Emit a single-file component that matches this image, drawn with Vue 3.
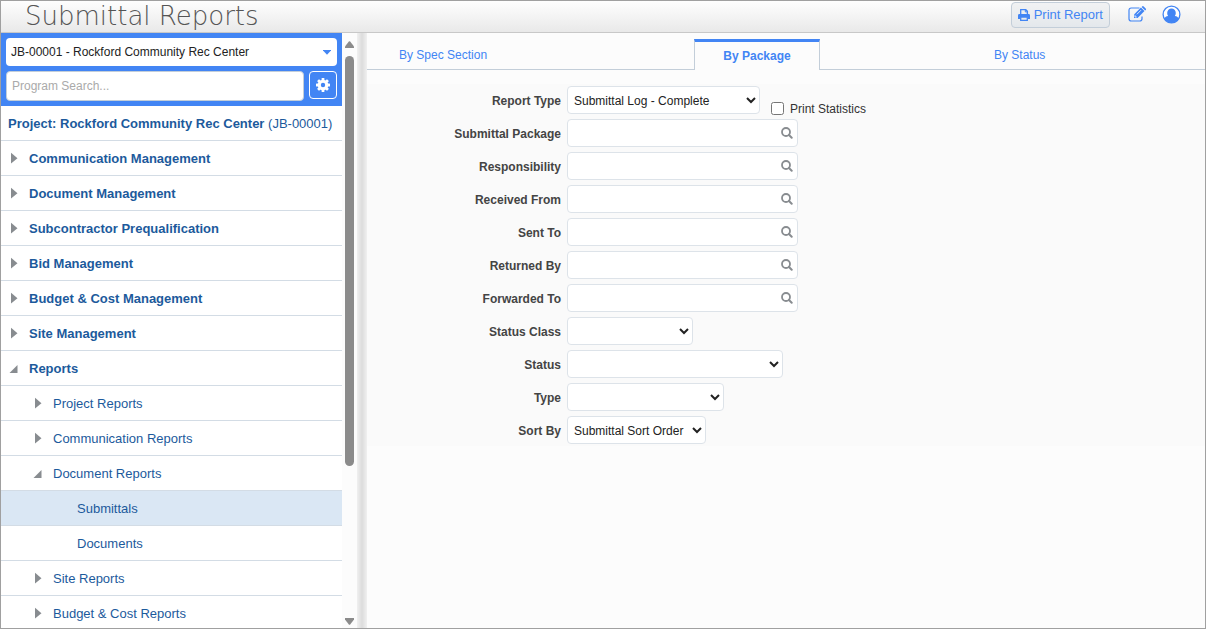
<script setup>
import { ref } from 'vue'

const project = ref('JB-00001 - Rockford Community Rec Center')
const search = ref('')
const printStats = ref(false)

const tree = [
  { label: 'Communication Management', level: 1 },
  { label: 'Document Management', level: 1 },
  { label: 'Subcontractor Prequalification', level: 1 },
  { label: 'Bid Management', level: 1 },
  { label: 'Budget & Cost Management', level: 1 },
  { label: 'Site Management', level: 1 },
  { label: 'Reports', level: 1, open: true },
  { label: 'Project Reports', level: 2 },
  { label: 'Communication Reports', level: 2 },
  { label: 'Document Reports', level: 2, open: true },
  { label: 'Submittals', level: 3, selected: true },
  { label: 'Documents', level: 3 },
  { label: 'Site Reports', level: 2 },
  { label: 'Budget & Cost Reports', level: 2 },
]

const fields = [
  { id: 'report-type', label: 'Report Type', kind: 'select', size: 'w-report', value: 'Submittal Log - Complete' },
  { id: 'package', label: 'Submittal Package', kind: 'lookup' },
  { id: 'responsibility', label: 'Responsibility', kind: 'lookup' },
  { id: 'received-from', label: 'Received From', kind: 'lookup' },
  { id: 'sent-to', label: 'Sent To', kind: 'lookup' },
  { id: 'returned-by', label: 'Returned By', kind: 'lookup' },
  { id: 'forwarded-to', label: 'Forwarded To', kind: 'lookup' },
  { id: 'status-class', label: 'Status Class', kind: 'select', size: 'w-class', value: '' },
  { id: 'status', label: 'Status', kind: 'select', size: 'w-status', value: '' },
  { id: 'type', label: 'Type', kind: 'select', size: 'w-type', value: '' },
  { id: 'sort-by', label: 'Sort By', kind: 'select', size: 'w-sort', value: 'Submittal Sort Order' },
]
</script>

<template>
  <div class="app">
    <header class="header">
      <h1 class="title">Submittal Reports</h1>
      <div class="actions">
        <button class="print" type="button">
          <svg width="12" height="12" viewBox="0 0 12 12" aria-hidden="true">
            <path d="M2.7 5V.7h5.1l1.6 1.6V5" fill="none" stroke="#4285f4" stroke-width="1.3" />
            <path d="M7.3.7v2.2h2.2" fill="none" stroke="#4285f4" stroke-width="1" />
            <path d="M1.4 5h9.2Q12 5 12 6.4V10H9.8V7.9H2.2V10H0V6.4Q0 5 1.4 5z" fill="#4285f4" />
            <path d="M2.7 8.2h6.6v3.1H2.7z" fill="none" stroke="#4285f4" stroke-width="1.3" />
          </svg>
          <span>Print Report</span>
        </button>
        <button class="icon-btn" type="button" aria-label="Edit">
          <svg width="19" height="17" viewBox="0 0 19 17" aria-hidden="true">
            <path d="M11.5 2H3.2Q1 2 1 4.2v8.6Q1 15 3.2 15h8.6q2.2 0 2.2-2.2V10.5" fill="none" stroke="#4285f4" stroke-width="1.2" />
            <path d="M6 12V8.400L12.900 1.500l3.600 3.600L9.600 12z" fill="#4285f4" />
            <path d="M13.600.9l.5-.5q.8-.7 1.600 0l2 2q.7.8 0 1.600l-.5.5z" fill="#4285f4" />
            <path d="M7 9.200v1.800h1.800M8.900 8.300l4.200-4.200" fill="none" stroke="#fff" stroke-width=".8" />
          </svg>
        </button>
        <button class="icon-btn" type="button" aria-label="Account">
          <svg width="19" height="19" viewBox="0 0 19 19" aria-hidden="true">
            <circle cx="9.5" cy="9.5" r="8.400" fill="#fff" stroke="#4285f4" stroke-width="1.3" />
            <path d="M2.300 14c.6-2.200 2-2.800 3.800-3.100A4.300 4.500 0 0 1 5.200 8a4.300 4.500 0 0 1 8.600 0c0 1.100-.3 2.100-.9 2.900 1.800.3 3.200.9 3.800 3.100A8.600 8.600 0 0 1 2.300 14z" fill="#4285f4" />
          </svg>
        </button>
      </div>
    </header>

    <div class="body">
      <aside class="sidebar">
        <div class="picker">
          <div class="project-box">
            <select v-model="project" class="project" aria-label="Project">
              <option>JB-00001 - Rockford Community Rec Center</option>
            </select>
            <svg class="caret" width="8" height="5" viewBox="0 0 8 5" aria-hidden="true">
              <path d="M0 0h8v.6L4 4.700 0 .6z" fill="#4285f4" />
            </svg>
          </div>
          <div class="search-row">
            <input v-model="search" class="search" type="text" placeholder="Program Search..." aria-label="Program Search" />
            <button class="gear" type="button" aria-label="Settings">
              <svg width="14" height="14" viewBox="0 0 14 14" aria-hidden="true">
                <g fill="#fff">
                  <rect v-for="a in 4" :key="a" x="5.6" y="0" width="2.8" height="14" rx=".5" :transform="`rotate(${a * 45} 7 7)`" />
                  <circle cx="7" cy="7" r="5.3" />
                </g>
                <circle cx="7" cy="7" r="2.200" fill="#4285f4" />
              </svg>
            </button>
          </div>
        </div>
        <div class="row project-row"><b>Project: Rockford Community Rec Center</b>&nbsp;(JB-00001)</div>
        <nav class="tree">
          <a
            v-for="n in tree"
            :key="n.label"
            href="#"
            class="row"
            :class="['level-' + n.level, { selected: n.selected }]"
          >
            <span v-if="n.level < 3" class="marker">
              <svg v-if="n.open" width="9" height="10" viewBox="0 0 9 10" aria-hidden="true"><path d="M8.500 2v8H.5z" fill="#888c90" /></svg>
              <svg v-else width="9" height="12" viewBox="0 0 9 12" aria-hidden="true"><path d="M2 .8l6.500 5.400L2 11.600z" fill="#888c90" /></svg>
            </span>
            {{ n.label }}
          </a>
        </nav>
      </aside>

      <div class="scrollbar" aria-hidden="true">
        <svg width="9" height="7" viewBox="0 0 9 7"><path d="M3.8.5q.7-.7 1.4 0L9 5.5V7H0V5.500z" fill="#8b8b8b" /></svg>
        <div class="track"><div class="thumb"></div></div>
        <svg width="9" height="7" viewBox="0 0 9 7"><path d="M3.8 6.5q.7.7 1.4 0L9 1.5V0H0v1.500z" fill="#8b8b8b" /></svg>
      </div>
      <div class="splitter"></div>

      <main class="main">
        <nav class="tabs">
          <div class="tab first"><a href="#">By Spec Section</a></div>
          <div class="tab active"><a href="#">By Package</a></div>
          <div class="tab last"><a href="#">By Status</a></div>
        </nav>
        <form class="form" @submit.prevent>
          <div v-for="f in fields" :key="f.id" class="field">
            <label class="name" :for="f.id">{{ f.label }}</label>
            <select v-if="f.kind === 'select'" :id="f.id" class="control" :class="f.size">
              <option>{{ f.value }}</option>
            </select>
            <div v-else class="lookup">
              <input :id="f.id" class="control" type="text" />
              <button class="find" type="button" :aria-label="'Find ' + f.label">
                <svg width="12" height="12" viewBox="0 0 12 12" aria-hidden="true">
                  <circle cx="5" cy="5" r="4" fill="none" stroke="#888c90" stroke-width="1.8" />
                  <path d="M8 8l2.700 2.700" stroke="#888c90" stroke-width="2" stroke-linecap="round" />
                </svg>
              </button>
            </div>
            <label v-if="f.id === 'report-type'" class="check">
              <input v-model="printStats" type="checkbox" />
              <span>Print Statistics</span>
            </label>
          </div>
        </form>
      </main>
    </div>
  </div>
</template>

<style>
body {
  margin: 0;
}
</style>

<style scoped>
* {
  box-sizing: border-box;
}
.app {
  display: flex;
  flex-direction: column;
  height: 100vh;
  border: 1px solid #a0a0a0;
  background: #fcfcfc;
  font-family: "Liberation Sans", Arial, sans-serif;
  font-size: 12px;
  overflow: hidden;
}
button,
input,
select {
  font: inherit;
  margin: 0;
}
a {
  text-decoration: none;
}
svg {
  display: block;
  flex: none;
}
.header {
  display: flex;
  align-items: center;
  justify-content: space-between;
  flex: none;
  height: 32px;
  padding: 0 24px;
  border-bottom: 1px solid #c8c8c8;
  background: linear-gradient(#fefefe, #e9e9e9);
}
.title {
  margin: 0;
  padding-bottom: 2px;
  font-family: "DejaVu Sans", sans-serif;
  font-size: 26px;
  line-height: 28px;
  font-weight: 200;
  color: #555;
  white-space: nowrap;
}
.actions {
  display: flex;
  align-items: center;
  padding-bottom: 4px;
}
.print {
  display: flex;
  align-items: center;
  gap: 4px;
  height: 26px;
  margin-right: 18px;
  padding: 0 6px;
  border: 1px solid #c3ced9;
  border-radius: 4px;
  background: linear-gradient(#f1f2f3, #e4e8ec);
  color: #4285f4;
  font-size: 13px;
}
.icon-btn {
  padding: 0;
  border: 0;
  background: none;
}
.icon-btn + .icon-btn {
  margin-left: 15px;
}
.body {
  display: flex;
  flex: 1;
  min-height: 0;
}
.sidebar {
  flex: none;
  width: 341px;
  background: #fff;
  overflow: hidden;
}
.picker {
  display: flex;
  flex-direction: column;
  gap: 5px;
  padding: 5px;
  background: #4285f4;
}
.project-box {
  position: relative;
}
.project {
  display: block;
  appearance: none;
  width: 100%;
  height: 28px;
  padding: 0 5px;
  border: 0;
  border-radius: 4px;
  background: #fff;
  color: #222;
}
.caret {
  position: absolute;
  right: 6px;
  top: 12px;
  pointer-events: none;
}
.search-row {
  display: flex;
  gap: 5px;
}
.search {
  flex: 1;
  min-width: 0;
  height: 30px;
  padding: 0 5px;
  border: 1px solid #c3ced9;
  border-radius: 4px;
  background: #fff;
}
.search::placeholder {
  color: #aaa;
}
.gear {
  display: flex;
  align-items: center;
  justify-content: center;
  width: 28px;
  height: 28px;
  padding: 0;
  border: 1px solid #fff;
  border-radius: 4px;
  background: #4285f4;
}
.row {
  display: flex;
  align-items: center;
  height: 35px;
  border-bottom: 1px solid #d3dce5;
  color: #1c5a9c;
  font-size: 13px;
  white-space: nowrap;
}
.project-row {
  padding: 0 7px;
}
.level-1 {
  padding-left: 8px;
  font-weight: bold;
}
.level-2 {
  padding-left: 32px;
}
.level-3 {
  padding-left: 76px;
}
.selected {
  background: #dae7f4;
}
.marker {
  width: 20px;
}
.scrollbar {
  display: flex;
  flex-direction: column;
  align-items: center;
  gap: 8px;
  flex: none;
  width: 15px;
  padding: 8px 0 3px;
  background: #fcfcfc;
}
.track {
  flex: 1;
  width: 9px;
}
.thumb {
  height: 74%;
  border-radius: 5px;
  background: #8b8b8b;
}
.splitter {
  flex: none;
  width: 10px;
  background: linear-gradient(90deg, #f0f0f0, #dcdcdc 50%, #f0f0f0);
}
.main {
  flex: 1;
  min-width: 0;
}
.tabs {
  display: grid;
  grid-template-columns: 327fr 126px 385fr;
  height: 37px;
  padding-top: 6px;
}
.tab {
  display: flex;
  align-items: center;
  padding-top: 2px;
  border-bottom: 1px solid #c3ced9;
}
.tab a {
  color: #4285f4;
}
.first {
  padding-left: 32px;
}
.active {
  justify-content: center;
  padding-top: 0;
  border: 1px solid #c3ced9;
  border-top: 3px solid #4285f4;
  border-bottom: 0;
  font-weight: bold;
}
.last {
  padding-left: 174px;
}
.form {
  display: flex;
  flex-direction: column;
  gap: 5px;
  margin-top: 14px;
  padding: 2px 0;
  background: #fafafa;
}
.field {
  display: flex;
  align-items: center;
  height: 28px;
}
.name {
  width: 194px;
  margin-right: 6px;
  padding-top: 2px;
  text-align: right;
  font-weight: bold;
  color: #444;
}
.control {
  height: 28px;
  padding: 1px 2px 0;
  border: 1px solid #dde3e9;
  border-radius: 4px;
  background: #fff;
  color: #222;
}
.w-report {
  width: 193px;
}
.w-class {
  width: 126px;
}
.w-status {
  width: 216px;
}
.w-type {
  width: 157px;
}
.w-sort {
  width: 139px;
}
.lookup {
  position: relative;
  width: 231px;
}
.lookup .control {
  display: block;
  width: 100%;
  padding-right: 24px;
}
.find {
  position: absolute;
  right: 5px;
  top: 8px;
  padding: 0;
  border: 0;
  background: none;
}
.check {
  display: flex;
  align-items: center;
  gap: 6px;
  margin-left: 11px;
  padding-top: 16px;
  color: #333;
}
.check input {
  width: 13px;
  height: 13px;
}
.check span {
  padding-top: 2px;
}
</style>
